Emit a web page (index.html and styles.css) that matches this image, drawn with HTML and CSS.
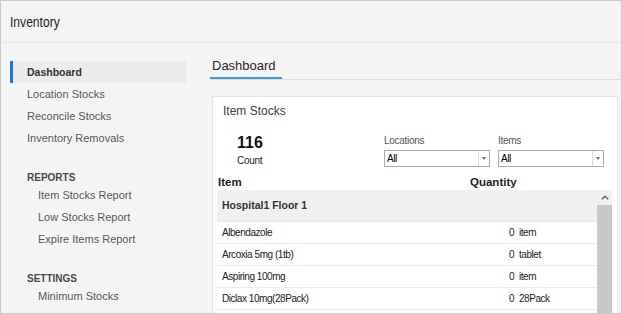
FILE: index.html
```html
<!DOCTYPE html>
<html>
  <head>
    <meta charset="utf-8">
    <title>Inventory</title>
    <link rel="stylesheet" href="styles.css">
  </head>
  <body>
    <div class="window">
      <div class="titlebar"><span class="title-text">Inventory</span></div>
      <div class="content">
        <div class="sidebar">
          <div class="nav-item active">Dashboard</div>
          <div class="nav-item">Location Stocks</div>
          <div class="nav-item">Reconcile Stocks</div>
          <div class="nav-item">Inventory Removals</div>

          <div class="nav-section">REPORTS</div>
          <div class="nav-item sub">Item Stocks Report</div>
          <div class="nav-item sub">Low Stocks Report</div>
          <div class="nav-item sub">Expire Items Report</div>

          <div class="nav-section">SETTINGS</div>
          <div class="nav-item sub">Minimum Stocks</div>
        </div>

        <div class="main">
          <div class="tabs">
            <span class="tab">Dashboard</span>
          </div>

          <div class="card">
            <div class="card-title">Item Stocks</div>
            <div class="stats">
              <div class="count">
                <div class="count-num">116</div>
                <div class="count-label">Count</div>
              </div>
              <div class="filter">
                <div class="filter-label">Locations</div>
                <div class="combo"><span class="combo-text">All</span><span class="combo-arrow"></span></div>
              </div>
              <div class="filter">
                <div class="filter-label">Items</div>
                <div class="combo"><span class="combo-text">All</span><span class="combo-arrow"></span></div>
              </div>
            </div>

            <div class="grid-head">
              <span class="head-item">Item</span>
              <span>Quantity</span>
            </div>
            <div class="grid-body">
              <div class="rows">
                <div class="group-row">Hospital1 Floor 1</div>
                <div class="row"><span class="name">Albendazole</span><span class="qty">0</span><span class="unit">item</span></div>
                <div class="row"><span class="name">Arcoxia 5mg (1tb)</span><span class="qty">0</span><span class="unit">tablet</span></div>
                <div class="row"><span class="name">Aspiring 100mg</span><span class="qty">0</span><span class="unit">item</span></div>
                <div class="row"><span class="name">Diclax 10mg(28Pack)</span><span class="qty">0</span><span class="unit">28Pack</span></div>
              </div>
              <div class="scrollbar">
                <div class="scroll-up">
                  <svg width="8" height="5" viewBox="0 0 8 5"><path d="M0.8 4.2 L4 1.2 L7.2 4.2" fill="none" stroke="#606060" stroke-width="1.4"/></svg>
                </div>
                <div class="thumb"></div>
              </div>
            </div>
          </div>
        </div>
      </div>
    </div>
  </body>
</html>
```

FILE: styles.css
```css
body {
  margin: 0;
  font-family: "Liberation Sans", Arial, sans-serif;
}

.window {
  width: 622px;
  height: 314px;
  box-sizing: border-box;
  border: 1px solid #c9c9c9;
  background-color: #f4f4f4;
  overflow: hidden;
}

.titlebar {
  height: 41px;
  border-bottom: 1px solid #e8e8e8;
  padding-left: 9px;
  display: flex;
  align-items: center;
}
.title-text {
  display: inline-block;
  font-size: 15.5px;
  color: #1e1e1e;
  transform: scaleX(0.78);
  transform-origin: left center;
}

.content {
  display: flex;
}

/* left menu */
.sidebar {
  width: 197px;
  padding-top: 18px;
  flex-shrink: 0;
}
.nav-item {
  margin-left: 9px;
  width: 176px;
  height: 22px;
  line-height: 22px;
  box-sizing: border-box;
  border-left: 3px solid transparent;
  padding-left: 14px;
  font-size: 11px;
  color: #585858;
}
.nav-item.active {
  background-color: #ebebeb;
  border-left-color: #1b78dc;
  font-weight: bold;
  font-size: 10.5px;
  color: #333333;
}
.nav-item.sub {
  padding-left: 25px;
}
.nav-section {
  margin: 23px 0 0 26px;
  height: 12px;
  line-height: 12px;
  font-size: 10px;
  font-weight: bold;
  color: #4a4a4a;
}

/* main area */
.main {
  flex: 1;
  padding: 14px 0 0 12px;
}
.tabs {
  border-bottom: 1px solid #dedede;
}
.tab {
  display: inline-block;
  padding: 0 6px 2px 2px;
  line-height: 18px;
  font-size: 13px;
  color: #2a2a2a;
  border-bottom: 2px solid #3d97e3;
  vertical-align: top;
}

.card {
  width: 406px;
  height: 240px;
  box-sizing: border-box;
  margin: 16px 0 0 2px;
  padding: 6px 5px 0 4px;
  background-color: #ffffff;
  border: 1px solid #e3e3e3;
}
.card-title {
  margin-left: 6px;
  line-height: 16px;
  font-size: 12px;
  color: #404040;
}

.stats {
  display: flex;
  align-items: flex-start;
  padding: 14px 0 6px 0;
}
.count {
  margin-left: 20px;
  width: 147px;
}
.count-num {
  line-height: 20px;
  font-size: 16px;
  font-weight: bold;
  color: #111111;
}
.count-label {
  margin-top: 1px;
  line-height: 14px;
  font-size: 10px;
  letter-spacing: -0.3px;
  color: #222222;
}
.filter {
  width: 106px;
  margin-top: 2px;
  margin-right: 8px;
}
.filter-label {
  line-height: 12px;
  font-size: 10px;
  letter-spacing: -0.3px;
  color: #555555;
}
.combo {
  margin-top: 3px;
  height: 17px;
  box-sizing: border-box;
  border: 1px solid #acacac;
  background-color: #ffffff;
  display: flex;
}
.combo-text {
  flex: 1;
  padding-left: 2px;
  line-height: 15px;
  font-size: 10px;
  letter-spacing: -0.4px;
  color: #000000;
}
.combo-arrow {
  width: 10px;
  border-left: 1px solid #dcdcdc;
  display: flex;
  align-items: center;
  justify-content: center;
}
.combo-arrow::after {
  content: "";
  border-left: 2.5px solid transparent;
  border-right: 2.5px solid transparent;
  border-top: 3px solid #707070;
}

/* item grid */
.grid-head {
  display: flex;
  height: 16px;
  line-height: 16px;
  font-size: 11.5px;
  font-weight: bold;
  color: #222222;
}
.head-item {
  width: 252px;
  padding-left: 1px;
}
.grid-body {
  display: flex;
  height: 130px;
}
.rows {
  width: 380px;
}
.group-row {
  height: 31px;
  line-height: 31px;
  padding-left: 5px;
  background-color: #f0f0f0;
  border-bottom: 1px solid #e6e6e6;
  font-size: 10.5px;
  font-weight: bold;
  color: #333333;
}
.row {
  display: grid;
  grid-template-columns: 257px 40px 1fr;
  height: 21px;
  line-height: 21px;
  border-bottom: 1px solid #ebebeb;
  font-size: 10px;
  letter-spacing: -0.45px;
  color: #222222;
}
.name {
  padding-left: 5px;
}
.qty {
  text-align: right;
}
.unit {
  padding-left: 5px;
}

.scrollbar {
  width: 15px;
  display: flex;
  flex-direction: column;
}
.scroll-up {
  height: 15px;
  background-color: #f0f0f0;
  display: flex;
  align-items: center;
  justify-content: center;
}
.thumb {
  flex: 1;
  background-color: #c8c8c8;
}
```
